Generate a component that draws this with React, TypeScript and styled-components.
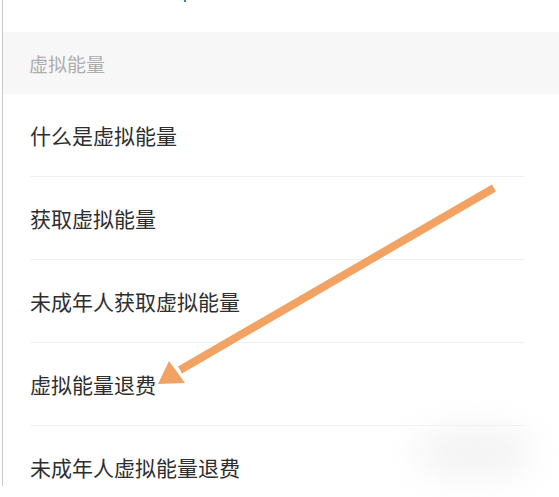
import React from 'react';
import styled, { createGlobalStyle } from 'styled-components';

const GlobalStyle = createGlobalStyle`
  html, body {
    margin: 0;
    padding: 0;
    background: #fff;
    font-family: "Noto Sans CJK SC", "Noto Sans", sans-serif;
  }
`;

const Page = styled.div`
  position: relative;
  width: 559px;
  height: 497px;
  overflow: hidden;
  background: #fff;
`;

const Panel = styled.div`
  margin-left: 2px;
  height: 486px;
  border-left: 1px solid #c9c9c9;
  padding-top: 32px;
  box-sizing: border-box;
`;

const SectionHeader = styled.div`
  height: 62px;
  background: #f7f7f7;
  display: flex;
  align-items: center;
  padding-left: 26px;
  font-size: 19px;
  color: #adadad;
`;

const List = styled.ul`
  list-style: none;
  margin: 0;
  padding: 0 34px 0 27px;
`;

const Item = styled.li<{ $last?: boolean }>`
  height: 82px;
  display: flex;
  align-items: center;
  font-size: 21px;
  color: #2e2e2e;
  border-bottom: ${p => (p.$last ? 'none' : '1px solid #f1f1f1')};
`;

const TopMark = styled.span`
  position: absolute;
  left: 184px;
  top: 0;
  width: 2px;
  height: 2px;
  background: #2a8ad8;
`;

const Blob = styled.div`
  position: absolute;
  left: 415px;
  top: 425px;
  width: 120px;
  height: 55px;
  border-radius: 50%;
  background: #f4f4f4;
  filter: blur(16px);
`;

const Arrow = styled.svg`
  position: absolute;
  left: 0;
  top: 0;
  pointer-events: none;
`;

const items = [
  '什么是虚拟能量',
  '获取虚拟能量',
  '未成年人获取虚拟能量',
  '虚拟能量退费',
  '未成年人虚拟能量退费',
];

const App = () => (
  <Page>
    <GlobalStyle />
    <TopMark />
    <Panel>
      <SectionHeader>虚拟能量</SectionHeader>
      <List>
        {items.map((t, i) => (
          <Item key={t} $last={i === items.length - 1}>{t}</Item>
        ))}
      </List>
    </Panel>
    <Blob />
    <Arrow width="559" height="497" viewBox="0 0 559 497">
      <line x1="494" y1="188" x2="180" y2="370" stroke="#f2a263" strokeWidth="8" />
      <polygon points="158,384 169,361 185,383" fill="#f2a263" />
    </Arrow>
  </Page>
);

export default App;
